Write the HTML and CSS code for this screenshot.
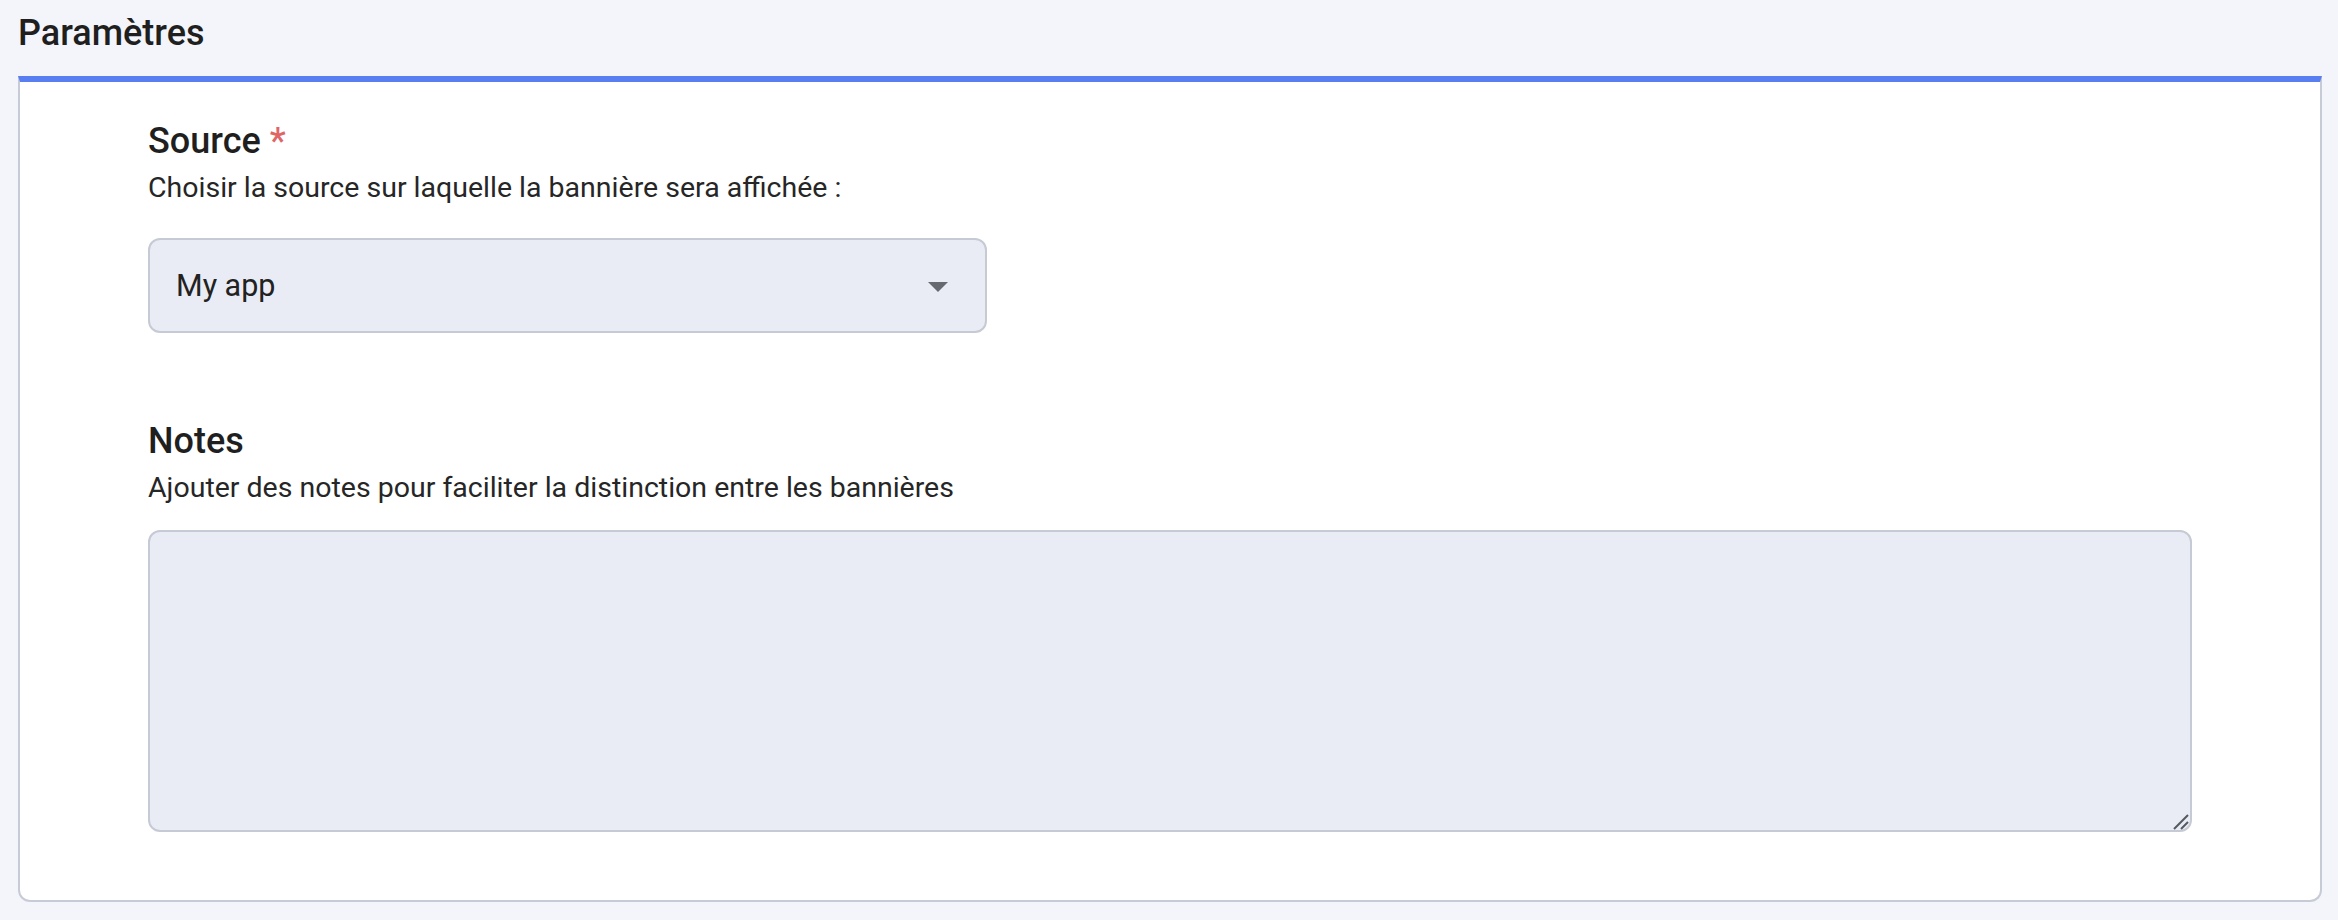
FILE: index.html
```html
<!DOCTYPE html>
<html lang="fr">
<head>
<meta charset="utf-8">
<title>Paramètres</title>
<link rel="stylesheet" href="styles.css">
</head>
<body>
<header class="page-header">
  <h1 class="page-title">Paramètres</h1>
</header>
<section class="card">
  <div class="field field-source">
    <label class="field-label">Source <span class="required">*</span></label>
    <p class="field-help">Choisir la source sur laquelle la bannière sera affichée :</p>
    <div class="select" role="combobox" aria-expanded="false">
      <span class="select-value">My app</span>
      <svg class="select-arrow" width="20" height="10" viewBox="0 0 20 10" aria-hidden="true"><path d="M0 0 H20 L10 10 Z" fill="#666a70"/></svg>
    </div>
  </div>
  <div class="field field-notes">
    <label class="field-label">Notes</label>
    <p class="field-help">Ajouter des notes pour faciliter la distinction entre les bannières</p>
    <div class="textarea-wrap">
      <textarea class="textarea"></textarea>
      <svg class="resize-grip" width="16" height="16" viewBox="0 0 16 16" aria-hidden="true">
        <path d="M1 15 L15 1 M8 15 L15 8" stroke="#555a60" stroke-width="2" fill="none"/>
      </svg>
    </div>
  </div>
</section>
</body>
</html>
```

FILE: styles.css
```css
* { box-sizing: border-box; }

html, body {
  margin: 0;
  padding: 0;
}

body {
  background: #f4f5fa;
  font-family: Roboto, "Noto Sans", "Liberation Sans", sans-serif;
  color: #222222;
  width: 2338px;
  height: 920px;
  overflow: hidden;
}

.page-header {
  padding: 6px 18px 16px 18px;
}

.page-title {
  margin: 0;
  font-size: 36px;
  line-height: 54px;
  font-weight: 500;
  color: #1f1f1f;
}

.card {
  margin: 0 16px 0 18px;
  background: #ffffff;
  border: 2px solid #c7cbd6;
  border-top: 6px solid #587ef2;
  border-radius: 0 0 12px 12px;
  padding: 32px 128px 68px 128px;
}

.field-label {
  display: block;
  font-size: 36px;
  line-height: 54px;
  font-weight: 500;
  color: #1f1f1f;
}

.required {
  color: #e06565;
}

.field-help {
  margin: 0;
  font-size: 28.5px;
  line-height: 40px;
  color: #262626;
}

.select {
  margin-top: 30px;
  width: 839px;
  height: 95px;
  background: #e9ecf4;
  border: 2px solid #c6cad5;
  border-radius: 12px;
  display: flex;
  align-items: center;
  justify-content: space-between;
  padding: 0 37px 0 26px;
}

.select-value {
  font-size: 30.5px;
  color: #222222;
}

.select-arrow {
  display: block;
  margin-top: 2px;
}

.field-notes {
  margin-top: 81px;
}

.textarea-wrap {
  position: relative;
  margin-top: 22px;
}

.textarea {
  display: block;
  width: 100%;
  height: 302px;
  background: #e9ecf4;
  border: 2px solid #c6cad5;
  border-radius: 12px;
  font-family: Roboto, "Noto Sans", sans-serif;
  font-size: 27px;
  resize: none;
}

.resize-grip {
  position: absolute;
  right: 3px;
  bottom: 2px;
  pointer-events: none;
}
```
